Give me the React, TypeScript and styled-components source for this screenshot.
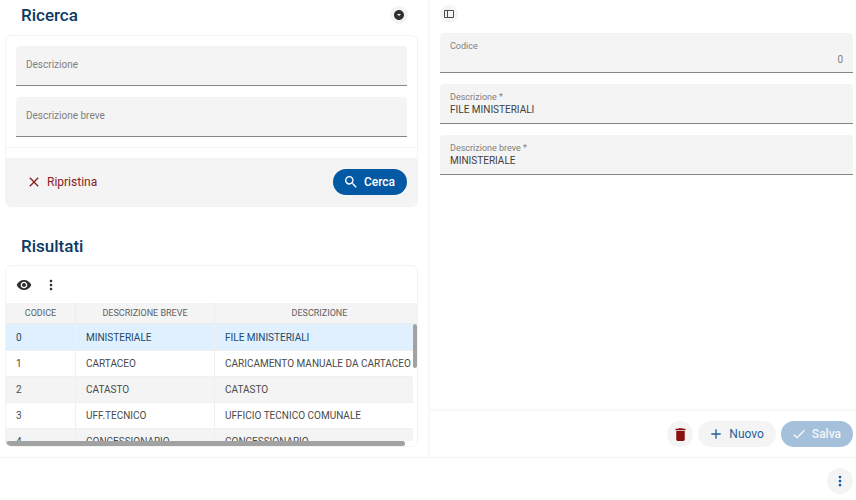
import React, { useState } from "react";
import styled, { createGlobalStyle } from "styled-components";
import {
  MdAdd,
  MdArrowDropDownCircle,
  MdCheck,
  MdClose,
  MdDelete,
  MdMoreVert,
  MdRemoveRedEye,
  MdSearch,
} from "react-icons/md";

const GlobalStyle = createGlobalStyle`
  *, *::before, *::after { box-sizing: border-box; }
  body {
    margin: 0;
    background: #fff;
    color: #3c3c3c;
    font-family: Roboto, "Liberation Sans", sans-serif;
    font-size: 10px;
  }
  button, input { font: inherit; }
`;

const Page = styled.div`
  display: flex;
  flex-direction: column;
  height: 100vh;
`;

const Workspace = styled.main`
  flex: 1;
  min-height: 0;
  display: grid;
  grid-template-columns: 1fr 1fr;
  border-bottom: 1px solid #f2f2f2;
`;

const SearchPane = styled.section`
  display: flex;
  flex-direction: column;
  min-width: 0;
  min-height: 0;
  padding: 0 10px 10px 5px;
`;

const DetailPane = styled.section`
  display: flex;
  flex-direction: column;
  min-width: 0;
  border-left: 2px solid #f8f8f8;
`;

const PaneHeader = styled.header`
  display: flex;
  align-items: center;
  justify-content: space-between;
  height: 30px;
  margin-bottom: 5px;
  padding: 0 10px 0 16px;
`;

const Title = styled.h2`
  margin: 0;
  color: #0b3a64;
  font-size: 17px;
  font-weight: 500;
  line-height: 20px;
`;

const Card = styled.div<{ $fill?: boolean }>`
  display: flex;
  flex-direction: column;
  flex: ${(p) => (p.$fill ? "1" : "none")};
  min-height: 0;
  border: 1px solid #f4f4f4;
  border-radius: 6px;
  overflow: hidden;
`;

const FieldStack = styled.div<{ $detail?: boolean }>`
  display: flex;
  flex-direction: column;
  gap: 11px;
  padding: ${(p) => (p.$detail ? "0 3px 0 10px" : "10px")};
`;

const FieldBox = styled.label`
  display: flex;
  flex-direction: column;
  justify-content: center;
  position: relative;
  height: 40px;
  padding: 0 10px;
  background: #f4f4f4;
  border-bottom: 1px solid #858585;
  border-radius: 4px 4px 0 0;
`;

const FieldLabel = styled.span<{ $resting?: boolean }>`
  color: #808080;
  font-size: ${(p) => (p.$resting ? "10px" : "9px")};
  line-height: 12px;
  ${(p) => p.$resting && "position: absolute; top: 13px; pointer-events: none;"}
`;

const FieldInput = styled.input<{ $numeric?: boolean }>`
  width: 100%;
  height: 14px;
  padding: 0;
  border: 0;
  outline: 0;
  background: transparent;
  color: ${(p) => (p.$numeric ? "#808080" : "#404040")};
  text-align: ${(p) => (p.$numeric ? "right" : "left")};
  line-height: 14px;
`;

const CardActions = styled.div`
  display: flex;
  align-items: center;
  justify-content: space-between;
  height: 48px;
  margin-top: 10px;
  padding: 0 10px;
  background: #f4f4f4;
`;

const Divider = styled.hr`
  width: 100%;
  margin: 0;
  border: 0;
  border-top: 1px solid #f4f4f4;
`;

const tones = {
  primary: { bg: "#0459a4", fg: "#ffffff" },
  danger: { bg: "transparent", fg: "#8a2020" },
  neutral: { bg: "#f4f4f4", fg: "#1f5f9f" },
  muted: { bg: "#a5c0db", fg: "#f2f6fa" },
};

const PillButton = styled.button<{ $tone: keyof typeof tones }>`
  display: inline-flex;
  align-items: center;
  gap: 5px;
  height: 26px;
  padding: 0 12px 0 10px;
  border: 0;
  border-radius: 13px;
  background: ${(p) => tones[p.$tone].bg};
  color: ${(p) => tones[p.$tone].fg};
  font-size: 12px;
  font-weight: ${(p) => (p.$tone === "muted" || p.$tone === "primary" ? 500 : 400)};
  cursor: pointer;
`;

const RoundButton = styled.button<{ $size: number; $color: string; $plain?: boolean }>`
  display: inline-flex;
  align-items: center;
  justify-content: center;
  width: ${(p) => p.$size}px;
  height: ${(p) => p.$size}px;
  padding: 0;
  border: 0;
  border-radius: 50%;
  background: ${(p) => (p.$plain ? "transparent" : "#f4f4f4")};
  color: ${(p) => p.$color};
  cursor: pointer;
`;

const ResultsHeader = styled(PaneHeader)`
  margin-top: 24px;
  margin-bottom: 4px;
`;

const TableTools = styled.div`
  display: flex;
  align-items: center;
  gap: 1px;
  height: 37px;
  flex: none;
  padding: 0 5px;
`;

const TableViewport = styled.div`
  position: relative;
  flex: 1;
  min-height: 0;
  overflow: hidden;
`;

const ResultsTable = styled.table`
  width: 100%;
  min-width: 419px;
  table-layout: fixed;
  border-collapse: separate;
  border-spacing: 0;
`;

const HeadCell = styled.th<{ $width?: number }>`
  width: ${(p) => (p.$width ? `${p.$width}px` : "auto")};
  height: 21px;
  padding: 0;
  background: #f4f4f4;
  border-right: 1px solid #ececec;
  border-bottom: 1px solid #ececec;
  color: #606060;
  font-size: 9px;
  font-weight: 400;
  text-align: center;
`;

const Cell = styled.td`
  height: 26px;
  padding: 0 0 0 10px;
  border-right: 1px solid #f0f0f0;
  border-bottom: 1px solid #f0f0f0;
  white-space: nowrap;
`;

const BodyRow = styled.tr<{ $selected?: boolean }>`
  background: #fff;
  color: ${(p) => (p.$selected ? "#23486c" : "#4a4a4a")};
  cursor: pointer;
  &:nth-child(odd) { background: ${(p) => (p.$selected ? "#e0f0ff" : "#f4f4f4")}; }
  &:nth-child(even) { background: ${(p) => (p.$selected ? "#e0f0ff" : "#fff")}; }
  &:first-child ${Cell} { height: 27px; }
`;

const VerticalTrack = styled.div`
  position: absolute;
  top: 21px;
  right: 0;
  bottom: 0;
  width: 4px;
  background: #fff;
`;

const HorizontalTrack = styled.div`
  position: absolute;
  left: 0;
  right: 0;
  bottom: 0;
  height: 5px;
  background: #fff;
`;

const Thumb = styled.div<{ $vertical?: boolean }>`
  width: ${(p) => (p.$vertical ? "100%" : "97%")};
  height: ${(p) => (p.$vertical ? "36%" : "100%")};
  border-radius: 3px;
  background: #a2a2a2;
`;

const DetailTools = styled.div`
  display: flex;
  align-items: center;
  height: 28px;
  margin-bottom: 5px;
  padding-left: 10px;
`;

const DetailActions = styled.div`
  display: flex;
  align-items: center;
  justify-content: flex-end;
  gap: 5px;
  height: 48px;
  margin-top: auto;
  padding-right: 3px;
  border-top: 2px solid #f8f8f8;
`;

const PageFooter = styled.footer`
  display: flex;
  align-items: center;
  justify-content: flex-end;
  height: 42px;
  padding: 4px 3px 0;
`;

function SidebarIcon() {
  return (
    <svg width="12" height="10" viewBox="0 0 12 10" fill="none" stroke="#4a4a4a" aria-hidden="true">
      <path d="M1.500 1.500h9v7h-9zM4.500 1.500v7" />
    </svg>
  );
}

type FieldProps = { label: string; value?: string };

function Field({ label, value = "" }: FieldProps) {
  const [text, setText] = useState(value);
  return (
    <FieldBox>
      <FieldLabel $resting={text === ""}>{label}</FieldLabel>
      <FieldInput value={text} onChange={(e) => setText(e.target.value)} />
    </FieldBox>
  );
}

const CodeBox = styled(FieldBox)`
  justify-content: flex-start;
  gap: 1px;
  padding-top: 7px;
`;

const rows = [
  ["0", "MINISTERIALE", "FILE MINISTERIALI"],
  ["1", "CARTACEO", "CARICAMENTO MANUALE DA CARTACEO"],
  ["2", "CATASTO", "CATASTO"],
  ["3", "UFF.TECNICO", "UFFICIO TECNICO COMUNALE"],
  ["4", "CONCESSIONARIO", "CONCESSIONARIO"],
];

export default function App() {
  const [selected, setSelected] = useState("0");
  return (
    <>
      <GlobalStyle />
      <Page>
        <Workspace>
          <SearchPane>
            <PaneHeader>
              <Title>Ricerca</Title>
              <RoundButton $size={18} $color="#303030" aria-label="Comprimi">
                <MdArrowDropDownCircle size={12} />
              </RoundButton>
            </PaneHeader>
            <Card>
              <FieldStack>
                <Field label="Descrizione" />
                <Field label="Descrizione breve" />
              </FieldStack>
              <Divider />
              <CardActions>
                <PillButton $tone="danger">
                  <MdClose size={16} /> Ripristina
                </PillButton>
                <PillButton $tone="primary">
                  <MdSearch size={16} /> Cerca
                </PillButton>
              </CardActions>
            </Card>
            <ResultsHeader>
              <Title>Risultati</Title>
            </ResultsHeader>
            <Card $fill>
              <TableTools>
                <RoundButton $plain $size={26} $color="#303030" aria-label="Visualizza">
                  <MdRemoveRedEye size={16} />
                </RoundButton>
                <RoundButton $plain $size={26} $color="#303030" aria-label="Altre azioni">
                  <MdMoreVert size={16} />
                </RoundButton>
              </TableTools>
              <TableViewport>
                <ResultsTable>
                  <thead>
                    <tr>
                      <HeadCell $width={70}>CODICE</HeadCell>
                      <HeadCell $width={139}>DESCRIZIONE BREVE</HeadCell>
                      <HeadCell>DESCRIZIONE</HeadCell>
                    </tr>
                  </thead>
                  <tbody>
                    {rows.map(([code, brief, description]) => (
                      <BodyRow key={code} $selected={selected === code} onClick={() => setSelected(code)}>
                        <Cell>{code}</Cell>
                        <Cell>{brief}</Cell>
                        <Cell>{description}</Cell>
                      </BodyRow>
                    ))}
                  </tbody>
                </ResultsTable>
                <VerticalTrack>
                  <Thumb $vertical />
                </VerticalTrack>
                <HorizontalTrack>
                  <Thumb />
                </HorizontalTrack>
              </TableViewport>
            </Card>
          </SearchPane>
          <DetailPane>
            <DetailTools>
              <RoundButton $size={18} $color="#4a4a4a" aria-label="Mostra pannello">
                <SidebarIcon />
              </RoundButton>
            </DetailTools>
            <FieldStack $detail>
              <CodeBox>
                <FieldLabel>Codice</FieldLabel>
                <FieldInput $numeric defaultValue="0" readOnly />
              </CodeBox>
              <Field label="Descrizione *" value="FILE MINISTERIALI" />
              <Field label="Descrizione breve *" value="MINISTERIALE" />
            </FieldStack>
            <DetailActions>
              <RoundButton $size={26} $color="#8a1010" aria-label="Elimina">
                <MdDelete size={17} />
              </RoundButton>
              <PillButton $tone="neutral">
                <MdAdd size={16} /> Nuovo
              </PillButton>
              <PillButton $tone="muted">
                <MdCheck size={16} /> Salva
              </PillButton>
            </DetailActions>
          </DetailPane>
        </Workspace>
        <PageFooter>
          <RoundButton $size={26} $color="#0459a4" aria-label="Altro">
            <MdMoreVert size={16} />
          </RoundButton>
        </PageFooter>
      </Page>
    </>
  );
}
